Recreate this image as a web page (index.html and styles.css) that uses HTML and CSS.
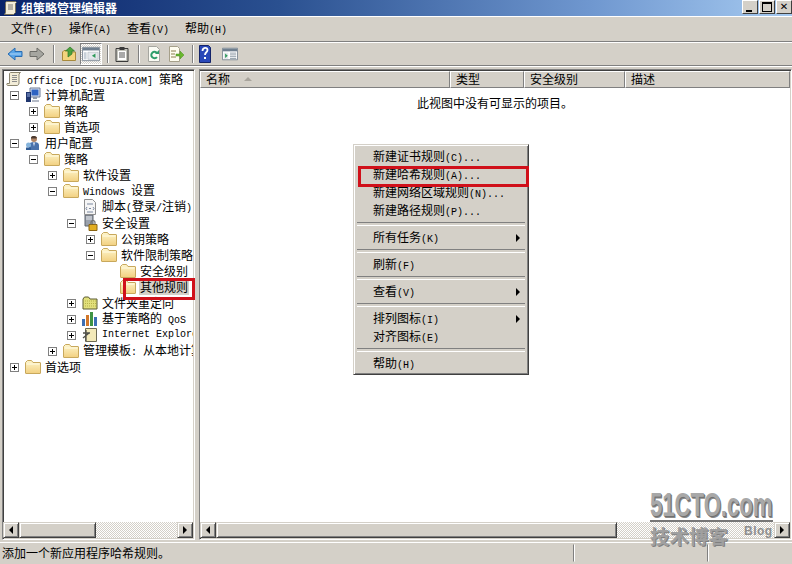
FILE: index.html
```html
<!DOCTYPE html>
<html lang="zh-CN">
<head>
<meta charset="utf-8">
<title>组策略管理编辑器</title>
<link rel="stylesheet" href="styles.css">
</head>
<body>
<svg class="defs" width="0" height="0" aria-hidden="true">
  <defs>
    <linearGradient id="fg" x1="0" y1="0" x2="0" y2="1"><stop offset="0" stop-color="#fef6cc"/><stop offset="1" stop-color="#f2d080"/></linearGradient>
    <symbol id="folder" viewBox="0 0 16 16"><path d="M.5 4V14a.5.5 0 0 0 .5.5h14a.5.5 0 0 0 .5-.5V4a.5.5 0 0 0-.5-.5H8L6.500 1.500H2.500L.5 3.500z" fill="url(#fg)" stroke="#c8a85c"/><path d="M1.500 5h13" stroke="#fffbe4"/></symbol>
    <symbol id="scroll" viewBox="0 0 16 16"><path d="M4.500 1.500h10l-1.500 1.500v9c0 1.500-1 2.500-2 2.500H2c-1 0-1.500-1-1-2h2.500V3c0-1 .5-1.500 1-1.500z" fill="#f3edd8" stroke="#8a846e"/><path d="M6 4.500h5M6 6.500h5M6 8.500h5M6 10.500h5" stroke="#8d8d8d"/></symbol>
    <symbol id="computer" viewBox="0 0 16 16"><path d="M5 1h10v9H5z" fill="#dfe6f2" stroke="#6c7a96"/><path d="M6.500 2.500h7v6h-7z" fill="#2f63c2"/><path d="M8 10h4v2H8z" fill="#8f98a8"/><path d="M1 5h5v10H1z" fill="#20366e"/><path d="M2 7h3M2 9h3" stroke="#90a8dc"/><path d="M7 13h7v2H7z" fill="#b4bac6"/></symbol>
    <symbol id="user" viewBox="0 0 16 16"><circle cx="9" cy="4" r="3" fill="#b08465"/><path d="M6 2.500c1-2 5-2 6 .5l-1 .5H6z" fill="#4b3a30"/><path d="M4 15V10c0-2 2-3 5-3s5 1 5 3v5z" fill="#4a72ac"/><path d="M8 7.500h2l-1 4z" fill="#e8eef6"/><circle cx="3.500" cy="10" r="2.500" fill="#86b4dc"/><path d="M1 15v-2.500h5V15z" fill="#2f5b94"/></symbol>
    <symbol id="script" viewBox="0 0 16 16"><path d="M2.500.5h8l3 3v12h-11z" fill="#f6f6f6" stroke="#8e8e8e"/><path d="M5 5h6M5 8l-1 1.500L5 11M11 8l1 1.500L11 11M7 9.500h2M5 13h6" stroke="#7b88a0" fill="none"/></symbol>
    <symbol id="secure" viewBox="0 0 16 16"><path d="M3 0h8v11H3z" fill="#9aa1ac" stroke="#5c626c"/><path d="M4 2h6M4 4h6" stroke="#e6e8ec"/><path d="M7 9.500h8V15.500H7z" fill="#e2ae22" stroke="#8a6410"/><path d="M9 9.500V7.500a2 2 0 0 1 4 0v2" fill="none" stroke="#6e6e6e" stroke-width="1.200"/></symbol>
    <symbol id="redirect" viewBox="0 0 16 16"><path d="M1 4V14h14V4H8L6.500 2H2.500z" fill="#e2e07c" stroke="#5c5c34"/><path d="M3 6h11M3 8.500h11M3 11h11" stroke="#b6b24a" stroke-dasharray="1 1"/></symbol>
    <symbol id="bars" viewBox="0 0 16 16"><path d="M0 8h3v7H0z" fill="#3d6fb4"/><path d="M4 4h3v11H4z" fill="#d2772b"/><path d="M8 1h3v14H8z" fill="#3f9344"/><path d="M12 6h3v9h-3z" fill="#3d6fb4"/></symbol>
    <symbol id="ie" viewBox="0 0 16 16"><path d="M3.500 1.500h11v13h-11z" fill="#f3e9b8" stroke="#6d6a54"/><path d="M1 6h7M4 3v11M1 11l6-5" stroke="#50504a" stroke-width="1.300" fill="none"/></symbol>
    <symbol id="back" viewBox="0 0 16 16"><path d="M1 8l7-6v3.500h7v5H8V14z" fill="#5aa5e8" stroke="#2a6db2"/><path d="M3 8h11" stroke="#aed4f5"/></symbol>
    <symbol id="forward" viewBox="0 0 16 16"><path d="M15 8L8 2v3.500H1v5h7V14z" fill="#a6a6a0" stroke="#6d6d68"/></symbol>
    <symbol id="up" viewBox="0 0 16 16"><path d="M1.500 6V14.500h13V6H8L7 4.500H3z" fill="#f3d47c" stroke="#a88a3c"/><path d="M7 11V5H4.500L9 1l4.500 4H11v3z" fill="#4da23c" stroke="#2d7a28" stroke-width=".7"/></symbol>
    <symbol id="panel" viewBox="0 0 20 18"><path d="M.5 1.500h19v15H.5z" fill="#fff" stroke="#77838f"/><path d="M1 2h18v3H1z" fill="#6f7f8f"/><path d="M2 7h3v8H2z" fill="#c8d0d8"/><path d="M6.500 7H18v8H6.500z" fill="#e4e8ec" stroke="#9aa4ae" stroke-width=".5"/><path d="M15 8.500v5L11 11z" fill="#2e9a5a"/></symbol>
    <symbol id="clip" viewBox="0 0 14 16"><path d="M1 2.500h12v13H1z" fill="#c4c4bc" stroke="#3a3a3a"/><path d="M3 5h8v9H3z" fill="#fff"/><path d="M4 7h6M4 9h6M4 11h6" stroke="#555"/><path d="M4.500 1h5v3h-5z" fill="#3a3a3a"/></symbol>
    <symbol id="refresh" viewBox="0 0 14 16"><path d="M1.500 .5h8l3 3v12h-11z" fill="#fbfbf4" stroke="#a6a6a0"/><path d="M10 11a3.200 3.200 0 1 1 0-4" fill="none" stroke="#2f9e6a" stroke-width="2"/><path d="M8 8h4V4z" fill="#2f9e6a"/></symbol>
    <symbol id="export" viewBox="0 0 16 16"><path d="M1.500 .5h8l2 2v13h-10z" fill="#fffdf0" stroke="#a6a08a"/><path d="M3 5h5M3 8h4M3 11h5" stroke="#8b7d50"/><path d="M8 8h4V5l4 4-4 4v-3H8z" fill="#6ab82e" stroke="#4a8a20" stroke-width=".5"/></symbol>
    <symbol id="help" viewBox="0 0 12 18"><path d="M.5.500h9l2 2v15h-11z" fill="#2a48b8" stroke="#14246a"/><path d="M3.500 6c0-4 5-4 5-1 0 2.500-2.500 2-2.500 5" fill="none" stroke="#fff" stroke-width="1.800"/><path d="M5 12h2v2H5z" fill="#fff"/></symbol>
    <symbol id="view" viewBox="0 0 18 16"><path d="M.5 1.500h17v13H.5z" fill="#fff" stroke="#77838f"/><path d="M1 2h16v3H1z" fill="#6f7f8f"/><path d="M2 6.500h5v7H2z" fill="#e4e8ec"/><path d="M3.500 7.500v5L6.500 10z" fill="#2e9a5a"/><path d="M9 7h7M9 9h7M9 11h7M9 13h7" stroke="#8a96a2"/></symbol>
    <symbol id="doc" viewBox="0 0 16 16"><path d="M3.500 1.500h9l1 1-1 1v9l-2 2h-9l1-2v-9c0-1 .5-2 1-2z" fill="#f3edd8" stroke="#756f58"/><path d="M5 5h5M5 7h5M5 9h5" stroke="#777"/></symbol>
  </defs>
</svg>

<div class="win">
  <header class="titlebar">
    <svg class="ti-icon"><use href="#doc"/></svg>
    <span class="ti-text">组策略管理编辑器</span>
    <div class="capbtns">
      <span class="capbtn"><i class="cap-min"></i></span>
      <span class="capbtn"><i class="cap-max"></i></span>
      <span class="capbtn cap-close">✕</span>
    </div>
  </header>

  <nav class="menubar">
    <span class="mb-item">文件<span class="lat">(F)</span></span>
    <span class="mb-item">操作<span class="lat">(A)</span></span>
    <span class="mb-item">查看<span class="lat">(V)</span></span>
    <span class="mb-item">帮助<span class="lat">(H)</span></span>
  </nav>

  <div class="toolbar">
    <svg class="tb tb-back"><use href="#back"/></svg>
    <svg class="tb tb-fwd"><use href="#forward"/></svg>
    <i class="tsep s1"></i>
    <svg class="tb tb-up"><use href="#up"/></svg>
    <span class="tb-pressed"><svg class="tb-panel"><use href="#panel"/></svg></span>
    <i class="tsep s2"></i>
    <svg class="tb tb-clip"><use href="#clip"/></svg>
    <i class="tsep s3"></i>
    <svg class="tb tb-refresh"><use href="#refresh"/></svg>
    <svg class="tb tb-export"><use href="#export"/></svg>
    <i class="tsep s4"></i>
    <svg class="tb tb-help"><use href="#help"/></svg>
    <svg class="tb tb-view"><use href="#view"/></svg>
  </div>

  <main class="panes">
    <section class="pane pane-tree">
      <div class="tree">
        <div class="row root"><svg class="ic"><use href="#scroll"/></svg><span class="root-text"><span class="lat">office [DC.YUJIA.COM] </span>策略</span></div>
        <div class="row l0"><i class="exp minus"></i><svg class="ic"><use href="#computer"/></svg><span>计算机配置</span></div>
        <div class="row l1"><i class="exp plus"></i><svg class="ic"><use href="#folder"/></svg><span>策略</span></div>
        <div class="row l1"><i class="exp plus"></i><svg class="ic"><use href="#folder"/></svg><span>首选项</span></div>
        <div class="row l0"><i class="exp minus"></i><svg class="ic"><use href="#user"/></svg><span>用户配置</span></div>
        <div class="row l1"><i class="exp minus"></i><svg class="ic"><use href="#folder"/></svg><span>策略</span></div>
        <div class="row l2"><i class="exp plus"></i><svg class="ic"><use href="#folder"/></svg><span>软件设置</span></div>
        <div class="row l2"><i class="exp minus"></i><svg class="ic"><use href="#folder"/></svg><span><span class="lat">Windows </span>设置</span></div>
        <div class="row l3"><i class="exp none"></i><svg class="ic"><use href="#script"/></svg><span>脚本<span class="lat">(</span>登录<span class="lat">/</span>注销<span class="lat">)</span></span></div>
        <div class="row l3"><i class="exp minus"></i><svg class="ic"><use href="#secure"/></svg><span>安全设置</span></div>
        <div class="row l4"><i class="exp plus"></i><svg class="ic"><use href="#folder"/></svg><span>公钥策略</span></div>
        <div class="row l4"><i class="exp minus"></i><svg class="ic"><use href="#folder"/></svg><span>软件限制策略</span></div>
        <div class="row l5"><i class="exp none"></i><svg class="ic"><use href="#folder"/></svg><span>安全级别</span></div>
        <div class="row l5"><i class="exp none"></i><svg class="ic"><use href="#folder"/></svg><span class="sel">其他规则</span></div>
        <div class="row l3"><i class="exp plus"></i><svg class="ic"><use href="#redirect"/></svg><span>文件夹重定向</span></div>
        <div class="row l3"><i class="exp plus"></i><svg class="ic"><use href="#bars"/></svg><span>基于策略的<span class="lat"> QoS</span></span></div>
        <div class="row l3"><i class="exp plus"></i><svg class="ic"><use href="#ie"/></svg><span class="lat">Internet Explorer 维护</span></div>
        <div class="row l2"><i class="exp plus"></i><svg class="ic"><use href="#folder"/></svg><span>管理模板<span class="lat">: </span>从本地计算机</span></div>
        <div class="row l0"><i class="exp plus"></i><svg class="ic"><use href="#folder"/></svg><span>首选项</span></div>
      </div>
      <div class="sbar">
        <span class="sb-btn"><i class="arr-l"></i></span>
        <span class="sb-thumb th-tree"></span>
        <span class="sb-track"></span>
        <span class="sb-btn"><i class="arr-r"></i></span>
      </div>
    </section>

    <section class="pane pane-list">
      <div class="lhead">
        <span class="col c1">名称<i class="sort"></i></span>
        <span class="col c2">类型</span>
        <span class="col c3">安全级别</span>
        <span class="col c4">描述</span>
      </div>
      <div class="lbody">此视图中没有可显示的项目。</div>
      <div class="sbar">
        <span class="sb-btn"><i class="arr-l"></i></span>
        <span class="sb-thumb th-list"></span>
        <span class="sb-track"></span>
        <span class="sb-btn"><i class="arr-r"></i></span>
      </div>
    </section>
  </main>

  <footer class="status">
    <span class="st st-main">添加一个新应用程序哈希规则。</span>
    <span class="st st-mid"></span>
    <span class="st st-end"></span>
  </footer>

  <div class="ctx">
    <div class="ci">新建证书规则<span class="lat">(C)...</span></div>
    <div class="ci">新建哈希规则<span class="lat">(A)...</span></div>
    <div class="ci">新建网络区域规则<span class="lat">(N)...</span></div>
    <div class="ci">新建路径规则<span class="lat">(P)...</span></div>
    <div class="csep"></div>
    <div class="ci sub">所有任务<span class="lat">(K)</span></div>
    <div class="csep"></div>
    <div class="ci">刷新<span class="lat">(F)</span></div>
    <div class="csep"></div>
    <div class="ci sub">查看<span class="lat">(V)</span></div>
    <div class="csep"></div>
    <div class="ci sub">排列图标<span class="lat">(I)</span></div>
    <div class="ci">对齐图标<span class="lat">(E)</span></div>
    <div class="csep"></div>
    <div class="ci">帮助<span class="lat">(H)</span></div>
  </div>

  <div class="redbox rb-tree"></div>
  <div class="redbox rb-menu"></div>

  <div class="wm wm-logo">51CTO.com</div>
  <div class="wm wm-rule"></div>
  <div class="wm wm-cn">技术博客</div>
  <div class="wm wm-blog">Blog</div>
</div>
</body>
</html>
```

FILE: styles.css
```css
* { box-sizing: border-box; }
html, body { margin: 0; padding: 0; }
body { width: 792px; height: 564px; overflow: hidden; background: #d4d0c8; }
.defs { position: absolute; }
.win {
  position: relative;
  width: 792px;
  height: 564px;
  display: flex;
  flex-direction: column;
  overflow: hidden;
  background: #d4d0c8;
  color: #000;
  font: 12px/16px "Noto Sans CJK SC", "Liberation Sans", sans-serif;
}
.lat { font: 10px/16px "Liberation Mono", monospace; }
i { display: block; font-style: normal; }

/* title bar */
.titlebar {
  height: 16px;
  flex: none;
  display: flex;
  align-items: center;
  background: linear-gradient(90deg, #0a246a 0%, #2a5090 35%, #7098d0 75%, #a6caf0 100%);
  color: #fff;
  font-weight: 700;
  padding-left: 3px;
}
.ti-icon { width: 16px; height: 16px; flex: none; }
.ti-text { margin-left: 2px; line-height: 16px; }
.capbtns { margin-left: auto; display: flex; align-self: flex-start; gap: 1px; }
.capbtn {
  width: 16px;
  height: 14px;
  background: #d4d0c8;
  border: 1px solid;
  border-color: #fff #404040 #404040 #fff;
  display: flex;
  align-items: center;
  justify-content: center;
  color: #000;
  font: 700 10px/12px "DejaVu Sans", sans-serif;
}
.cap-min { width: 6px; height: 2px; background: #000; margin-top: 7px; margin-right: 2px; }
.cap-max { width: 10px; height: 10px; border: 1px solid #000; border-top-width: 2px; }

/* menu bar */
.menubar {
  height: 26px;
  flex: none;
  display: flex;
  align-items: center;
  gap: 16px;
  padding-left: 11px;
  border-top: 1px solid #fff;
  border-bottom: 1px solid #808080;
}
.mb-item { width: 42px; white-space: nowrap; }

/* toolbar */
.toolbar {
  height: 24px;
  flex: none;
  display: flex;
  align-items: center;
  padding-left: 7px;
  border-top: 1px solid #fff;
  border-bottom: 1px solid #808080;
}
.tb { width: 16px; height: 16px; flex: none; }
.tb-fwd { margin-left: 6px; }
.tsep { width: 2px; height: 18px; flex: none; border-left: 1px solid #808080; border-right: 1px solid #fff; }
.s1 { margin-left: 8px; }
.tb-up { margin-left: 6px; }
.tb-pressed {
  width: 22px;
  height: 22px;
  flex: none;
  margin-left: 3px;
  display: flex;
  align-items: center;
  justify-content: center;
  border: 1px solid;
  border-color: #808080 #fff #fff #808080;
  background: repeating-conic-gradient(#fff 0 25%, #d4d0c8 0 50%) 0 0 / 2px 2px;
}
.tb-panel { width: 18px; height: 16px; }
.s2 { margin-left: 5px; }
.tb-clip { margin-left: 6px; width: 14px; }
.s3 { margin-left: 9px; }
.tb-refresh { margin-left: 7px; width: 14px; }
.tb-export { margin-left: 7px; }
.s4 { margin-left: 8px; }
.tb-help { margin-left: 5px; width: 12px; height: 18px; }
.tb-view { margin-left: 11px; }

/* panes */
.panes {
  flex: 1;
  min-height: 0;
  display: flex;
  gap: 4px;
  padding: 2px 0 2px 2px;
  border-top: 1px solid #fff;
}
.pane {
  display: flex;
  flex-direction: column;
  min-width: 0;
  border: 1px solid;
  border-color: #808080 #fff #fff #808080;
  box-shadow: inset 1px 1px #404040, inset -1px -1px #d4d0c8;
  padding: 1px 1px 1px 0;
  background: #fff;
}
.pane-tree { width: 193px; flex: none; }
.pane-list { flex: 1; }

.tree { flex: 1; min-height: 0; overflow: hidden; }
.row {
  height: 16px;
  display: flex;
  align-items: center;
  white-space: nowrap;
  line-height: 16px;
}
.root { padding: 2px 0 0 3px; }
.root .ic { margin-top: -2px; }
.root .root-text { margin-left: 5px; white-space: pre; }
.l0 { padding-left: 7px; }
.l1 { padding-left: 26px; }
.l2 { padding-left: 45px; }
.l3 { padding-left: 64px; }
.l4 { padding-left: 83px; }
.l5 { padding-left: 102px; }
.ic { width: 16px; height: 16px; flex: none; }
.exp {
  position: relative;
  width: 9px;
  height: 9px;
  flex: none;
  margin-right: 6px;
  border: 1px solid #808080;
  background: #fff;
}
.exp.none { border: 0; background: none; }
.exp.minus::before, .exp.plus::before {
  content: "";
  position: absolute;
  left: 1px; top: 3px;
  width: 5px; height: 1px;
  background: #000;
}
.exp.plus::after {
  content: "";
  position: absolute;
  left: 3px; top: 1px;
  width: 1px; height: 5px;
  background: #000;
}
.l0 .ic + span, .l1 .ic + span, .l2 .ic + span, .l3 .ic + span, .l4 .ic + span, .l5 .ic + span { margin-left: 4px; }
.row .ic + .sel { background: #d4d0c8; padding: 0 1px; margin-left: 3px; }

/* scroll bars */
.sbar { height: 16px; flex: none; display: flex; }
.sb-btn, .sb-thumb {
  background: #d4d0c8;
  border: 1px solid;
  border-color: #d4d0c8 #404040 #404040 #d4d0c8;
  box-shadow: inset 1px 1px #fff, inset -1px -1px #808080;
}
.sb-btn { width: 16px; flex: none; display: flex; align-items: center; justify-content: center; }
.sb-thumb { flex: none; }
.th-tree { width: 77px; }
.th-list { width: 401px; }
.sb-track { flex: 1; background: repeating-conic-gradient(#fff 0 25%, #d4d0c8 0 50%) 0 0 / 2px 2px; }
.arr-l, .arr-r { width: 0; height: 0; border-top: 4px solid transparent; border-bottom: 4px solid transparent; }
.arr-l { border-right: 4px solid #000; }
.arr-r { border-left: 4px solid #000; }

/* list */
.lhead { height: 17px; flex: none; display: flex; line-height: 14px; }
.col {
  display: flex;
  align-items: flex-start;
  padding-left: 5px;
  background: #d4d0c8;
  border: 1px solid;
  border-color: #fff #808080 #808080 #fff;
  white-space: nowrap;
}
.c1 { width: 250px; }
.c2 { width: 74px; }
.c3 { width: 101px; }
.c4 { flex: 1; }
.sort {
  width: 0; height: 0;
  margin: 5px 0 0 14px;
  border-left: 4px solid transparent;
  border-right: 4px solid transparent;
  border-bottom: 4px solid #a8a49c;
}
.lbody { flex: 1; min-height: 0; text-align: center; padding-top: 7px; background: #fff; }

/* status */
.status { height: 22px; flex: none; display: flex; padding: 1px 0 2px; border-top: 1px solid #fff; }
.st { display: block; border: 1px solid; line-height: 16px; white-space: nowrap; }
.st-main { width: 574px; padding-left: 1px; border-color: transparent #808080 transparent transparent; }
.st-mid { width: 134px; border-color: transparent #808080 transparent #fff; }
.st-end { flex: 1; border-color: transparent transparent transparent #fff; }

/* context menu */
.ctx {
  position: absolute;
  left: 353px;
  top: 144px;
  width: 176px;
  height: 231px;
  padding: 3px 2px;
  background: #d4d0c8;
  border: 1px solid;
  border-color: #d4d0c8 #404040 #404040 #d4d0c8;
  box-shadow: inset 1px 1px #fff, inset -1px -1px #808080;
}
.ci { position: relative; height: 18px; line-height: 16px; padding-left: 17px; white-space: nowrap; }
.ci.sub::after {
  content: "";
  position: absolute;
  right: 6px;
  top: 5px;
  border-top: 4px solid transparent;
  border-bottom: 4px solid transparent;
  border-left: 4px solid #000;
}
.csep { height: 9px; padding-top: 2px; margin: 0 1px; }
.csep::before { content: ""; display: block; height: 2px; border-top: 1px solid #808080; border-bottom: 1px solid #fff; }

/* annotations */
.redbox { position: absolute; border: 3px solid #d0101a; }
.rb-tree { left: 123px; top: 278px; width: 72px; height: 22px; }
.rb-menu { left: 358px; top: 166px; width: 171px; height: 21px; }

/* watermark */
.wm { position: absolute; color: #9a9a9a; white-space: nowrap; }
.wm-logo {
  left: 650px;
  top: 487px;
  font: 700 33px/36px "Liberation Sans", sans-serif;
  color: #a8a8a8;
  text-shadow: 1px 1px 0 #707070, 2px 2px 0 #8a8a8a;
  transform: scaleX(.67);
  transform-origin: left top;
}
.wm-rule { left: 650px; top: 520px; width: 123px; height: 2px; background: #777; }
.wm-cn { left: 650px; top: 526px; font: 700 19.5px/20px "Noto Sans CJK SC", sans-serif; color: #a0a0a0; text-shadow: 1px 1px 0 #808080; }
.wm-blog { left: 744px; top: 524px; font: 700 12px/14px "Liberation Sans", sans-serif; letter-spacing: .5px; color: #8e8e8e; }
```
